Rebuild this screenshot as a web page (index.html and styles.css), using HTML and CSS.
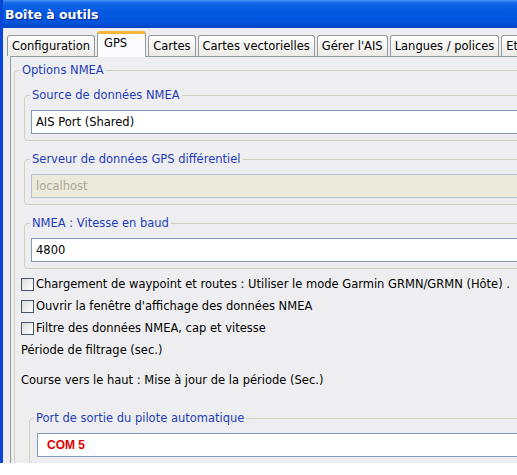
FILE: index.html
```html
<!DOCTYPE html>
<html lang="fr">
<head>
<meta charset="utf-8">
<title>Boîte à outils</title>
<link rel="stylesheet" href="styles.css">
</head>
<body>
<div class="window">
  <div class="titlebar"><span class="title">Boîte à outils</span></div>
  <div class="client">
    <div class="tabs">
      <div class="tab">Configuration</div>
      <div class="tab active">GPS</div>
      <div class="tab">Cartes</div>
      <div class="tab">Cartes vectorielles</div>
      <div class="tab">Gérer l'AIS</div>
      <div class="tab">Langues / polices</div>
      <div class="tab">Etc</div>
    </div>
    <div class="panel">
      <fieldset class="group outer">
        <legend>Options NMEA</legend>
        <fieldset class="group inner">
          <legend>Source de données NMEA</legend>
          <div class="field">AIS Port (Shared)</div>
        </fieldset>
        <fieldset class="group inner">
          <legend>Serveur de données GPS différentiel</legend>
          <div class="field disabled">localhost</div>
        </fieldset>
        <fieldset class="group inner last">
          <legend>NMEA : Vitesse en baud</legend>
          <div class="field">4800</div>
        </fieldset>
        <div class="check first"><span class="box"></span>Chargement de waypoint et routes : Utiliser le mode Garmin GRMN/GRMN (Hôte) .</div>
        <div class="check"><span class="box"></span>Ouvrir la fenêtre d'affichage des données NMEA</div>
        <div class="check"><span class="box"></span>Filtre des données NMEA, cap et vitesse</div>
        <div class="line">Période de filtrage (sec.)</div>
        <div class="line gap">Course vers le haut : Mise à jour de la période (Sec.)</div>
        <fieldset class="group port">
          <legend>Port de sortie du pilote automatique</legend>
          <div class="field com">COM 5</div>
        </fieldset>
      </fieldset>
    </div>
  </div>
</div>
</body>
</html>
```

FILE: styles.css
```css
html, body {
  margin: 0;
  padding: 0;
  background: #ffffff;
  overflow: hidden;
}
body {
  font-family: "DejaVu Sans", "Liberation Sans", sans-serif;
  font-size: 11.5px;
  color: #000;
}
.window {
  width: 620px;
  height: 463px;
  overflow: hidden;
  border-left: 3px solid #0846d8;
  background: #eeeef0;
  box-sizing: border-box;
}
.titlebar {
  height: 28px;
  background: linear-gradient(to bottom, #4a93f5 0, #1068ea 3px, #0559e2 40%, #0454dc 80%, #0445c4 100%);
  display: flex;
  align-items: center;
  padding-left: 2px;
}
.title {
  color: #fff;
  font-weight: bold;
  font-size: 12.5px;
  text-shadow: 1px 1px 0 #0a2a80;
}
.client {
  background: #eeeef0;
}
.tabs {
  display: flex;
  align-items: flex-end;
  gap: 2px;
  margin-left: 4px;
  height: 28px;
  position: relative;
  z-index: 1;
}
.tab {
  height: 21px;
  box-sizing: border-box;
  padding: 0 4px;
  line-height: 20px;
  border: 1px solid #919b9c;
  border-bottom: none;
  border-radius: 3px 3px 0 0;
  background: linear-gradient(to bottom, #ffffff, #ecebe6);
  white-space: nowrap;
}
.tab.active {
  height: 26px;
  margin-bottom: -1px;
  padding: 0 18px 0 6px;
  line-height: 19px;
  border-top: 3px solid #f6b43a;
  background: #fcfcfe;
}
.panel {
  margin-left: 7px;
  border: 1px solid #919b9c;
  padding: 6px 0 0 3px;
  height: 420px;
  background: #eeeef0;
}
.group {
  border: 1px solid #d0d0bf;
  border-radius: 4px;
  margin: 0;
  min-width: 0;
}
.group legend {
  color: #1e3db8;
  line-height: 14px;
  padding: 0 2px;
}
.outer {
  padding: 11px 0 0 9px;
  border-bottom: none;
}
.outer > legend {
  margin-left: -4px;
}
.inner {
  padding: 8px 0 6px 6px;
  margin-bottom: 11px;
}
.inner > legend {
  margin-left: -1px;
}
.inner.last {
  margin-bottom: 0;
}
.field {
  height: 24px;
  box-sizing: border-box;
  border: 1px solid #7f9db9;
  background: #fff;
  line-height: 22px;
  padding-left: 4px;
}
.field.disabled {
  background: #ebeadb;
  color: #aca899;
  border-color: #b5c2d2;
}
.check {
  display: flex;
  align-items: center;
  height: 22px;
  margin-left: -3px;
  white-space: nowrap;
}
.check.first {
  margin-top: 4px;
}
.box {
  width: 13px;
  height: 13px;
  box-sizing: border-box;
  border: 1px solid #44566b;
  background: linear-gradient(135deg, #dcdcd7, #ffffff);
  margin-right: 2px;
  flex: none;
}
.line {
  height: 22px;
  line-height: 22px;
  margin-left: -3px;
}
.line.gap {
  margin-top: 8px;
}
.port {
  margin: 20px 0 0 5px;
  padding: 8px 0 6px 7px;
}
.port > legend {
  margin-left: -3px;
}
.field.com {
  color: #e00000;
  font-family: "Liberation Sans", Arial, sans-serif;
  font-weight: bold;
  font-size: 12px;
  padding-left: 9px;
}
```
